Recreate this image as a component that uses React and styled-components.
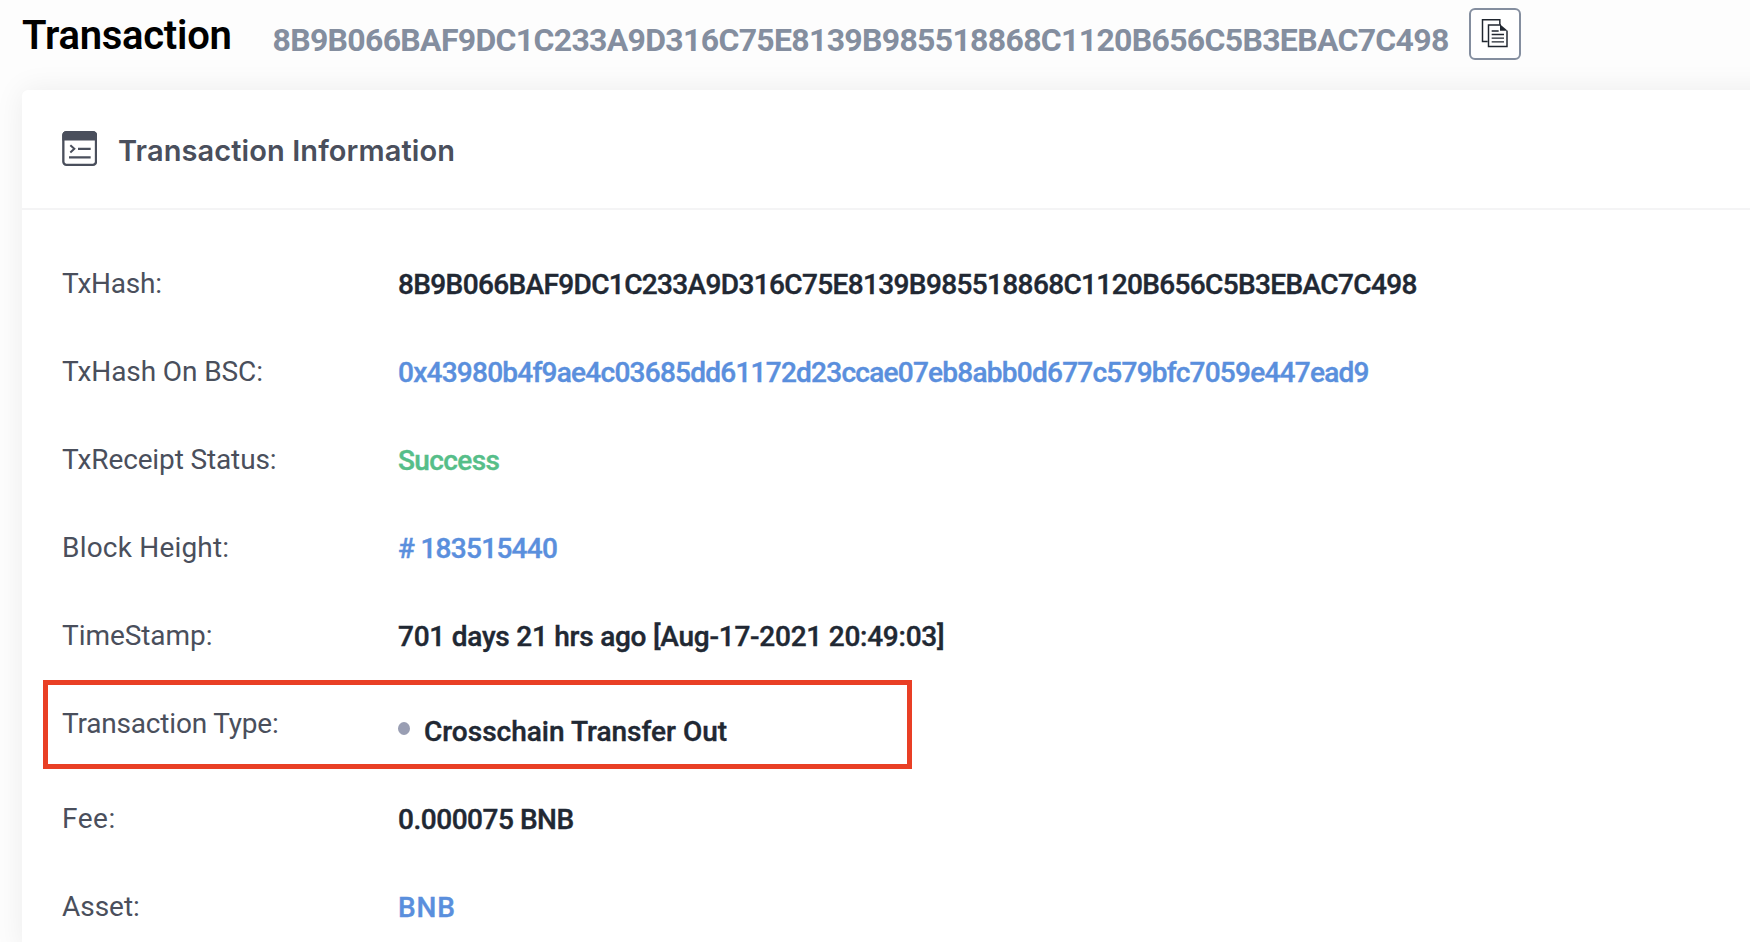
import React from 'react';
import styled, { createGlobalStyle } from 'styled-components';

const GlobalStyle = createGlobalStyle`
  *, *::before, *::after { box-sizing: border-box; }
  html, body { margin: 0; height: 100%; overflow: hidden; background: #fdfdfd; }
  body { font-family: Roboto, 'Liberation Sans', sans-serif; }
`;

const colors = {
  dark: '#212833',
  link: '#5a8fdd',
  success: '#56be89',
  label: '#4a4f5c',
  muted: '#848e9f',
};

const Page = styled.main`
  display: flex;
  flex-direction: column;
  height: 942px;
  overflow: hidden;
`;

const TitleBar = styled.header`
  display: flex;
  align-items: flex-start;
  flex: 0 0 90px;
  padding-left: 22px;
  white-space: nowrap;
`;

const Title = styled.h1`
  flex: 0 0 250.5px;
  margin: 0;
  font-size: 40px;
  font-weight: 600;
  line-height: 72px;
  letter-spacing: -0.26px;
  color: #000;
`;

const TitleHash = styled.span`
  flex: 0 0 1196.5px;
  font-size: 32px;
  font-weight: 700;
  line-height: 80px;
  letter-spacing: -0.685px;
  color: ${colors.muted};
`;

const CopyButton = styled.button`
  display: flex;
  flex: 0 0 52px;
  height: 52px;
  margin: 8px 0 0;
  padding: 9px 0 0 10px;
  border: 2px solid ${colors.muted};
  border-radius: 6px;
  background: #fff;
`;

const Card = styled.section`
  flex: 1;
  margin: 0 -40px 0 22px;
  border-radius: 6px 0 0 0;
  background: #fff;
  box-shadow: 0 0 30px rgba(0, 0, 0, 0.07);
`;

const CardHeader = styled.div`
  display: flex;
  align-items: center;
  gap: 21px;
  height: 120px;
  padding: 3px 0 0 40px;
  border-bottom: 2px solid #f4f4f5;
`;

const CardIcon = styled.svg`
  width: 35px;
  height: 35px;
  margin-top: -5px;
`;

const CardTitle = styled.h2`
  margin: 0;
  font-family: Inter, sans-serif;
  font-size: 29px;
  font-weight: 600;
  letter-spacing: 0.09px;
  color: ${colors.label};
`;

const Rows = styled.dl`
  margin: 0;
  padding: 30px 0 0 40px;
`;

const Row = styled.div`
  position: relative;
  display: flex;
  align-items: flex-start;
  height: ${(p) => (p.$tall ? 95 : 88)}px;
  font-size: 28px;
  line-height: 88px;
  white-space: nowrap;
`;

const Label = styled.dt`
  flex: 0 0 336px;
  letter-spacing: ${(p) => p.$spacing}px;
  color: ${colors.label};
`;

const Value = styled.dd`
  display: flex;
  align-items: center;
  margin: ${(p) => (p.$lowered ? 8 : 1)}px 0 0;
  font-weight: 500;
  letter-spacing: ${(p) => p.$spacing}px;
  color: ${(p) => colors[p.$tone || 'dark']};
  -webkit-text-stroke: 0.4px currentColor;
`;

const Dot = styled.span`
  width: 12px;
  height: 13px;
  margin: -8px 14px 0 0;
  border-radius: 50%;
  background: #999eb3;
`;

const Highlight = styled.div`
  position: absolute;
  top: 0;
  left: -19px;
  width: 869px;
  height: 89px;
  border: 5px solid #e93f25;
`;

const HASH = '8B9B066BAF9DC1C233A9D316C75E8139B985518868C1120B656C5B3EBAC7C498';

const details = [
  { label: 'TxHash:', ls: -0.22, value: HASH, vs: -0.632 },
  {
    label: 'TxHash On BSC:',
    ls: -0.1,
    value: '0x43980b4f9ae4c03685dd61172d23ccae07eb8abb0d677c579bfc7059e447ead9',
    vs: -0.75,
    tone: 'link',
  },
  { label: 'TxReceipt Status:', ls: -0.13, value: 'Success', vs: -0.611, tone: 'success' },
  { label: 'Block Height:', ls: 0.2, value: '# 183515440', vs: -0.716, tone: 'link' },
  { label: 'TimeStamp:', ls: -0.06, value: '701 days 21 hrs ago [Aug-17-2021 20:49:03]', vs: -0.245 },
  { label: 'Transaction Type:', ls: -0.19, value: 'Crosschain Transfer Out', vs: 0.008, highlighted: true },
  { label: 'Fee:', ls: 0.5, value: '0.000075 BNB', vs: -0.471 },
  { label: 'Asset:', ls: -0.03, value: 'BNB', vs: 0.9, tone: 'link' },
];

function CopyIcon() {
  return (
    <svg width="27" height="29" viewBox="78 57 81 87" fill="none" stroke="#20262f" strokeWidth="4.4">
      <path d="M98 124.5H82.5V59.5H134.5V74" />
      <path d="M138 75H100.5V139.5H156V92" />
      <path d="M135 73L158 92H135Z" fill="#20262f" stroke="none" />
      <path d="M110 93H131M110 103.5H147M110 114.5H147M110 125.5H147" strokeWidth="3.8" />
    </svg>
  );
}

function ConsoleIcon() {
  return (
    <CardIcon viewBox="67 61.5 105 105" fill="none" stroke={colors.label}>
      <rect x="71" y="65" width="98" height="98" rx="9" strokeWidth="7" />
      <path d="M68 90V75Q68 62 81 62H159Q172 62 172 75V90Z" fill={colors.label} stroke="none" />
      <path d="M92 104L104 115L92 126" strokeWidth="6" />
      <path d="M115 115H153M88 140.5H153" strokeWidth="7" />
    </CardIcon>
  );
}

export default function App() {
  return (
    <>
      <GlobalStyle />
      <Page>
        <TitleBar>
          <Title>Transaction</Title>
          <TitleHash>{HASH}</TitleHash>
          <CopyButton aria-label="Copy">
            <CopyIcon />
          </CopyButton>
        </TitleBar>
        <Card>
          <CardHeader>
            <ConsoleIcon />
            <CardTitle>Transaction Information</CardTitle>
          </CardHeader>
          <Rows>
            {details.map((d) => (
              <Row key={d.label} $tall={d.highlighted}>
                <Label $spacing={d.ls}>{d.label}</Label>
                <Value $spacing={d.vs} $tone={d.tone} $lowered={d.highlighted}>
                  {d.highlighted && <Dot />}
                  {d.value}
                </Value>
                {d.highlighted && <Highlight />}
              </Row>
            ))}
          </Rows>
        </Card>
      </Page>
    </>
  );
}
